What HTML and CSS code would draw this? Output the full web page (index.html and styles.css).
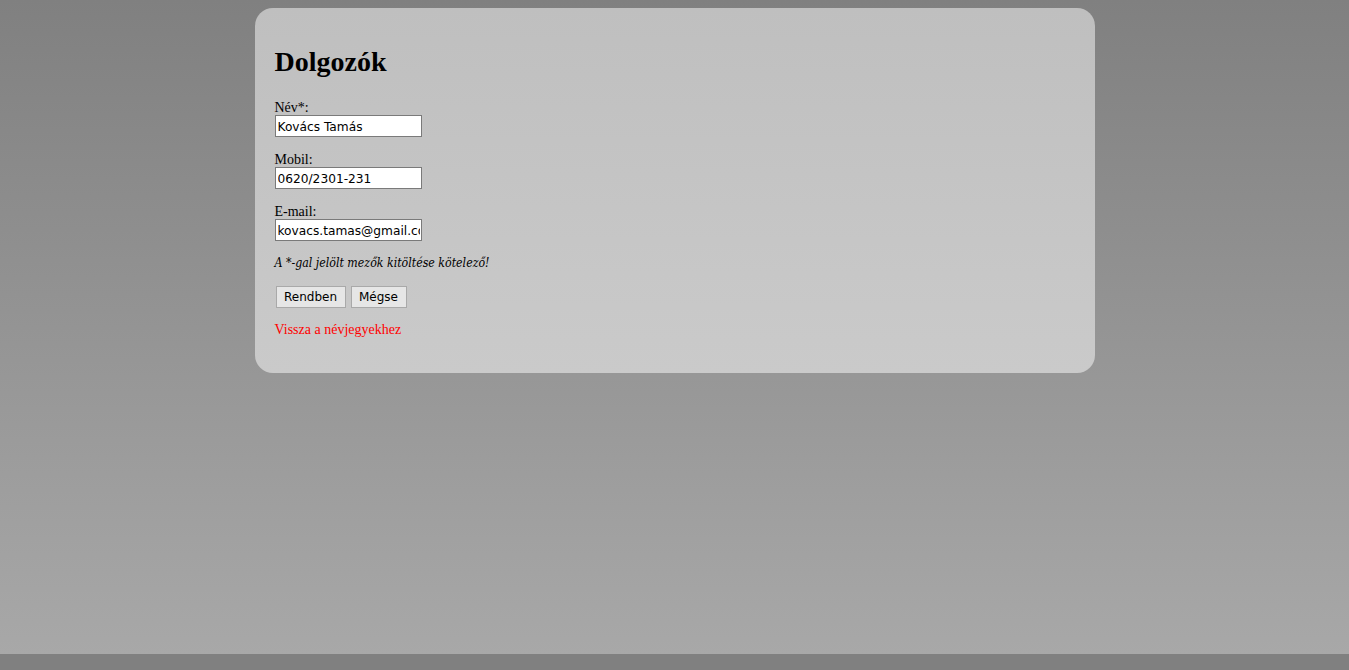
FILE: index.html
```html
<!DOCTYPE html>
<html lang="hu">
<head>
<meta charset="utf-8">
<title>Dolgozók</title>
<link rel="stylesheet" href="styles.css">
</head>
<body>
<div class="page">
  <div class="card">
    <h1 class="title">Dolgozók</h1>
    <form class="form">
      <div class="field">
        <label class="label" for="nev">Név*:</label>
        <input class="input" id="nev" type="text" value="Kovács Tamás">
      </div>
      <div class="field">
        <label class="label" for="mobil">Mobil:</label>
        <input class="input" id="mobil" type="text" value="0620/2301-231">
      </div>
      <div class="field">
        <label class="label" for="email">E-mail:</label>
        <input class="input" id="email" type="text" value="kovacs.tamas@gmail.com">
      </div>
      <p class="note">A *-gal jelölt mezők kitöltése kötelező!</p>
      <div class="buttons">
        <button class="btn" type="button">Rendben</button>
        <button class="btn" type="button">Mégse</button>
      </div>
    </form>
    <a class="back" href="#">Vissza a névjegyekhez</a>
  </div>
</div>
</body>
</html>
```
FILE: styles.css
```css
html, body {
  margin: 0;
  padding: 0;
}
body {
  background: #808080;
  font-family: "Liberation Serif", "Times New Roman", serif;
  font-size: 14px;
  color: #000;
}
.page {
  height: 654px;
  box-sizing: border-box;
  padding-top: 8px;
  background: linear-gradient(#808080, #a8a8a8);
}
.card {
  width: 800px;
  margin: 0 auto;
  padding: 38px 20px 35px;
  border-radius: 18px;
  background: linear-gradient(#bfbfbf, #cacaca);
  display: flex;
  flex-direction: column;
  align-items: flex-start;
}
.title {
  font-size: 28px;
  line-height: 32px;
  font-weight: bold;
  margin: 0 0 22px;
}
.form {
  display: flex;
  flex-direction: column;
  align-items: flex-start;
  margin: 0;
}
.field {
  display: flex;
  flex-direction: column;
  align-items: flex-start;
  margin-bottom: 15px;
}
.label {
  display: block;
  line-height: 15px;
  height: 15px;
}
.input {
  box-sizing: border-box;
  width: 147px;
  height: 22px;
  margin: 0;
  padding: 1px 1px 0 2px;
  border: 1px solid #7a7a7a;
  background: #fff;
  font-family: "DejaVu Sans", sans-serif;
  font-size: 12.2px;
  color: #000;
}
.note {
  margin: 0 0 16px;
  line-height: 14px;
  font-family: "DejaVu Serif", serif;
  font-stretch: condensed;
  font-style: italic;
  font-size: 12.25px;
}
.buttons {
  display: flex;
  gap: 5px;
  margin-left: 1px;
}
.btn {
  box-sizing: border-box;
  height: 22px;
  margin: 0;
  padding: 0 7.5px;
  border: 1px solid #a9a9a9;
  background: #e6e6e6;
  font-family: "DejaVu Sans", sans-serif;
  font-size: 12px;
  color: #000;
}
.back {
  margin-top: 14px;
  line-height: 16px;
  color: #ff0000;
  text-decoration: none;
}
```
